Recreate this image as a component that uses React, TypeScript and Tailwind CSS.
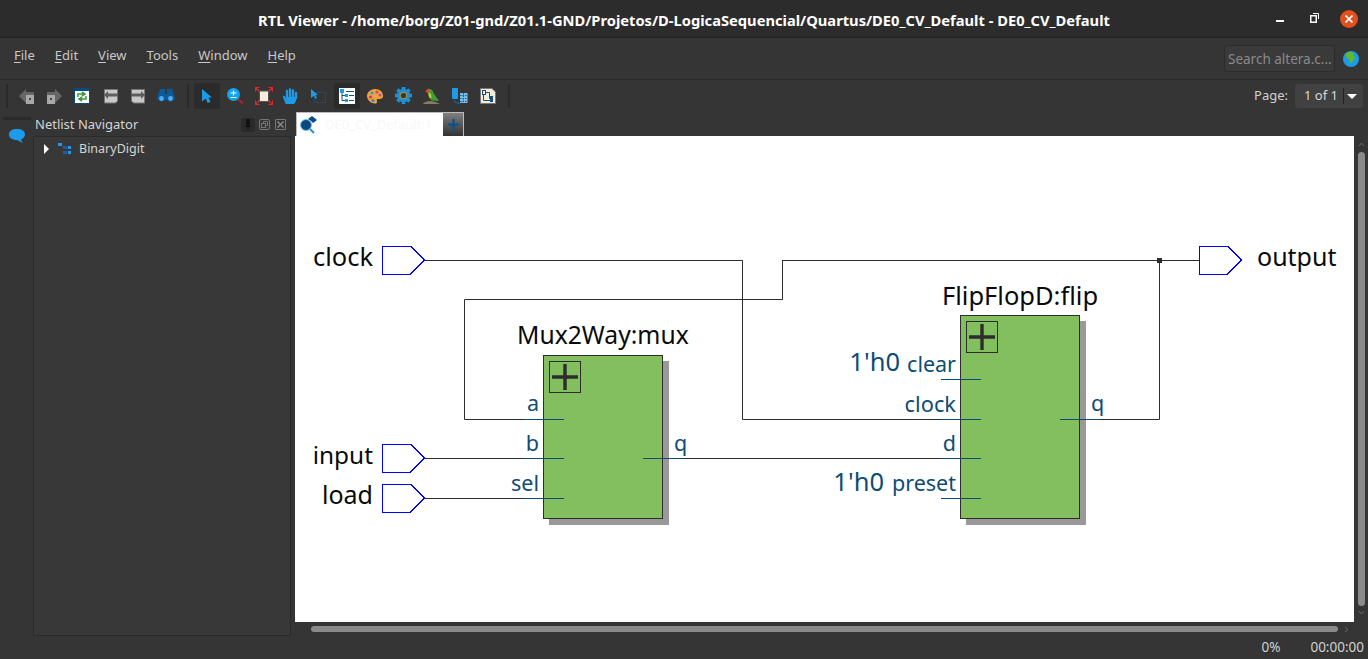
import React from "react";

const font = { fontFamily: '"Noto Sans", sans-serif' };

function Ic({ w = 18, h = 18, children }: { w?: number; h?: number; children: React.ReactNode }) {
  return (
    <svg width={w} height={h} viewBox={`0 0 ${w} ${h}`} className="block shrink-0">
      {children}
    </svg>
  );
}

const Back = ({ flip }: { flip?: boolean }) => (
  <Ic w={16} h={16}>
    <g transform={flip ? "translate(16,0) scale(-1,1)" : undefined}>
      <path d="M0 8 L7 1 V4 H15 V9 H7 V15 Z" fill="#666" />
      <rect x="7" y="7" width="8" height="9" fill="#a8a8a8" />
      <rect x="10" y="10" width="2" height="2" fill="#444" />
    </g>
  </Ic>
);

const Refresh = () => (
  <Ic w={16} h={16}>
    <rect x="0.5" y="0.5" width="15" height="15" fill="#fff" stroke="#0b4a80" />
    <rect x="0" y="0" width="16" height="3" fill="#0b4a80" />
    <path d="M4 9 V6 H10 M8 4 L11 6 L8 8" fill="none" stroke="#3f9a3f" strokeWidth="1.6" />
    <path d="M12 8 V11 H6 M8 9 L5 11 L8 13" fill="none" stroke="#3f9a3f" strokeWidth="1.6" />
  </Ic>
);

const Page = ({ flip }: { flip?: boolean }) => (
  <Ic w={16} h={16}>
    <g transform={flip ? "translate(16,0) scale(-1,1)" : undefined}>
      <path d="M1.5 1.5 H14.5 V13 L12.5 15 H1.5 Z" fill="#c8c8c8" stroke="#777" />
      <path d="M1 7 L5 3 V5.5 H15 V8.5 H5 V11 Z" fill="#5e5e5e" />
    </g>
  </Ic>
);

const Binoculars = () => (
  <Ic w={18} h={16}>
    <path d="M3 1 H8 V6 H10 V1 H15 L18 10 A4.5 4.5 0 0 1 10 12 H8 A4.5 4.5 0 0 1 0 10 Z" fill="#0a5a9c" />
    <circle cx="4.5" cy="10.5" r="2.4" fill="#52aee8" />
    <circle cx="13.5" cy="10.5" r="2.4" fill="#52aee8" />
  </Ic>
);

const Pointer = () => (
  <Ic w={10} h={14}>
    <path d="M0 0 L10 8.5 H6.5 L8.5 13 L5.5 14 L3.8 9.5 L0 12.5 Z" fill="#1e9be8" />
  </Ic>
);

const Zoom = () => (
  <Ic w={17} h={16}>
    <path d="M9.5 9.5 L16 15.5" stroke="#b3202a" strokeWidth="2" />
    <circle cx="6.5" cy="6.5" r="6.5" fill="#0ea5ee" />
    <path d="M3.5 5 H9.5 M6.5 2.5 V7.5 M3.5 9.5 H9.5" stroke="#fff" strokeWidth="1.2" />
  </Ic>
);

const Fit = () => (
  <Ic w={18} h={18}>
    <rect x="4.5" y="4" width="9" height="10.5" fill="#f6eeda" stroke="#555" />
    <path
      d="M0.5 4.5 V0.5 H4.5 M0.5 0.5 L4.5 4.5 M17.5 4.5 V0.5 H13.5 M17.5 0.5 L13.5 4.5 M0.5 13.5 V17.5 H4.5 M0.5 17.5 L4.5 13.5 M17.5 13.5 V17.5 H13.5 M17.5 17.5 L13.5 13.5"
      fill="none"
      stroke="#e8232a"
      strokeWidth="1.2"
    />
  </Ic>
);

const Hand = () => (
  <Ic w={16} h={16}>
    <path d="M4 16 L1 9 M4 10 V3 M7 9 V1.5 M10 9 V2.5 M13 10 V5" stroke="#1e9be8" strokeWidth="2.3" strokeLinecap="round" fill="none" />
    <path d="M3 9 H14 L12.5 14 L11 16 H4 Z" fill="#1e9be8" />
  </Ic>
);

const SelectRect = () => (
  <Ic w={15} h={14}>
    <rect x="3.5" y="3.5" width="11" height="10" fill="none" stroke="#1c5e8e" strokeDasharray="1 1" />
    <path d="M0 0 L7 6 H4.6 L6 9 L4.4 9.8 L3 6.8 L0 9 Z" fill="#1e9be8" />
  </Ic>
);

const Hier = () => (
  <Ic w={16} h={16}>
    <rect width="16" height="16" fill="#fff" />
    <rect x="1" y="1" width="4" height="4" fill="#1e9be8" />
    <rect x="6" y="6" width="3" height="3" fill="#1e9be8" />
    <rect x="6" y="11" width="3" height="3" fill="#1e9be8" />
    <path d="M3 5 V12.5 H6 M3 7.5 H6 M7 3.5 H15 M10 7.5 H15 M10 12.5 H15" fill="none" stroke="#12507e" strokeWidth="1" />
  </Ic>
);

const Palette = () => (
  <Ic w={16} h={16}>
    <path d="M8 1 C13 1 16 4 16 8 C16 11 13 11 11 11 C9 11 10 13 10 14 C10 15 9 15.5 8 15.5 C4 15.5 0 12 0 8 C0 4 4 1 8 1 Z" fill="#f0a23c" />
    <circle cx="5" cy="5" r="1.6" fill="#2f9be0" />
    <circle cx="10" cy="4" r="1.6" fill="#e04848" />
    <circle cx="13" cy="7" r="1.5" fill="#a050c0" />
    <circle cx="3.5" cy="9" r="1.6" fill="#e03070" />
    <circle cx="6" cy="12.5" r="1.6" fill="#3a80d8" />
  </Ic>
);

const Gear = () => (
  <Ic w={17} h={17}>
    <g fill="#1e8fd8">
      <circle cx="8.5" cy="8.5" r="6.6" />
      <rect x="6.7" y="0" width="3.6" height="17" />
      <rect x="0" y="6.7" width="17" height="3.6" />
      <rect x="6.7" y="0" width="3.6" height="17" transform="rotate(45 8.5 8.5)" />
      <rect x="6.7" y="0" width="3.6" height="17" transform="rotate(-45 8.5 8.5)" />
    </g>
    <circle cx="8.5" cy="8.5" r="3.8" fill="#a88a2c" />
    <circle cx="8.5" cy="8.5" r="2.6" fill="#2c3a44" />
  </Ic>
);

const Parrot = () => (
  <Ic w={17} h={16}>
    <path d="M4.5 1 C7 0 10 2 10.5 5 L16 13 L8.5 12.5 C5.5 10 4 6 4.5 1 Z" fill="#3f9e3a" />
    <path d="M2.5 4 C2.5 2 4.5 0.5 6 1.5 L6 5 Z" fill="#e0482c" />
    <path d="M5.5 4.5 C7.5 4.5 8.5 7.5 8.5 10 L6.5 9.5 Z" fill="#e8c030" />
    <path d="M0 15.5 C4 12 9 12 17 16 H0 Z" fill="#8d7a63" />
  </Ic>
);

const Layers = () => (
  <Ic w={16} h={16}>
    <rect x="0" y="0" width="6" height="11" rx="1" fill="#1e9be8" />
    <rect x="8" y="5" width="7.5" height="10" fill="#7bbce8" />
    <path d="M8 7.5 H15.5 M8 10.5 H15.5 M8 13.5 H15.5 M11.5 5 V15" stroke="#1c5e8e" strokeDasharray="1.5 1" />
    <path d="M2.5 12 C2.5 14.5 4.5 15.5 7.5 15.5 L6 13.5" fill="none" stroke="#1c5e8e" strokeWidth="1.2" />
  </Ic>
);

const Schem = () => (
  <Ic w={16} h={16}>
    <path d="M0.5 0.5 H12 L15.5 4 V15.5 H0.5 Z" fill="#f3ecd8" stroke="#777" />
    <rect x="2.5" y="2.5" width="3" height="4" fill="none" stroke="#12507e" />
    <path d="M5.5 4.5 H9.5 V10.5 H11 M3.5 6.5 V12.5 H11" fill="none" stroke="#12507e" />
    <rect x="10" y="8" width="3" height="6" fill="#12507e" />
  </Ic>
);

const Sep = () => <div className="w-[2px] h-[24px] bg-[#2a2a2a] shrink-0" />;

function Globe() {
  return (
    <svg width="16" height="16" viewBox="0 0 16 16" className="block">
      <circle cx="8" cy="8" r="8" fill="#1a9ce6" />
      <path d="M4 1.5 C7 0.5 10 1 11 2 L10 4 L12 6 L11 9 L9 11 L8 14 L7 10 L5 8 L3 6 L2.5 3.5 Z" fill="#5fb82e" />
    </svg>
  );
}

function Menu({ label }: { label: string }) {
  return (
    <span>
      <span className="underline underline-offset-2">{label[0]}</span>
      {label.slice(1)}
    </span>
  );
}

function Pin({ x, cy }: { x: number; cy: number }) {
  return (
    <path
      d={`M${x + 0.5} ${cy - 14} H${x + 28.5} L${x + 42.5} ${cy} L${x + 28.5} ${cy + 14} H${x + 0.5} Z`}
      fill="#fff"
      stroke="#0000ff"
      strokeWidth="1"
      shapeRendering="crispEdges"
    />
  );
}

function Block({ x, y, r, b }: { x: number; y: number; r: number; b: number }) {
  const px = x + 6;
  const py = y + 6;
  return (
    <g>
      <rect x={x + 6} y={y + 6} width={r - x + 1} height={b - y + 1} fill="#999999" />
      <rect x={x + 0.5} y={y + 0.5} width={r - x} height={b - y} fill="#83bf5f" stroke="#2d2d2d" />
      <rect x={px + 0.5} y={py + 0.5} width={31} height={31} fill="none" stroke="#2d2d2d" />
      <path d={`M${px + 3} ${py + 16} H${px + 29} M${px + 16} ${py + 3} V${py + 29}`} stroke="#2d2d2d" strokeWidth="3.4" />
    </g>
  );
}

const blue = "#0e4c75";
const wire = "#2d2d2d";

function Diagram() {
  const t = (x: number, y: number, s: string, size: number, fill: string, anchor: "start" | "end" = "end") => (
    <text x={x} y={y} fontSize={size} fill={fill} textAnchor={anchor} style={font}>
      {s}
    </text>
  );
  return (
    <svg width="1059" height="486" viewBox="295 136 1059 486" className="block bg-white">
      <Block x={543} y={355} r={662} b={518} />
      <Block x={960} y={315} r={1079} b={518} />
      <path
        d="M424 260.5 H742.5 V419.5 H941 M782 260.5 H1199 M782.5 260.5 V299.5 H464.5 V419.5 H524 M424 458.5 H524 M424 498.5 H524 M683 458.5 H941 M1100 419.5 H1159.5 V260.5"
        fill="none"
        stroke={wire}
      />
      <path
        d="M524 419.5 H564 M524 458.5 H564 M524 498.5 H564 M643 458.5 H683 M941 379.5 H981 M941 419.5 H981 M941 458.5 H981 M941 498.5 H981 M1060 419.5 H1100"
        fill="none"
        stroke={blue}
      />
      <rect x="1157" y="258" width="5" height="5" fill={wire} />
      <Pin x={382} cy={260} />
      <Pin x={382} cy={458} />
      <Pin x={382} cy={498} />
      <Pin x={1199} cy={260} />
      {t(373, 266, "clock", 25.5, "#0a0a0a")}
      {t(373, 464, "input", 24.4, "#0a0a0a")}
      {t(373, 504, "load", 25, "#0a0a0a")}
      {t(1257, 266, "output", 25, "#0a0a0a", "start")}
      {t(517, 344, "Mux2Way:mux", 24.7, "#0a0a0a", "start")}
      {t(942, 305, "FlipFlopD:flip", 25.5, "#0a0a0a", "start")}
      {t(539, 411, "a", 21.5, blue)}
      {t(539, 450.5, "b", 21.5, blue)}
      {t(539, 491, "sel", 21.5, blue)}
      {t(674, 451, "q", 21.5, blue, "start")}
      {t(956, 372, "clear", 21.5, blue)}
      {t(956, 412, "clock", 21.8, blue)}
      {t(956, 450.5, "d", 21.5, blue)}
      {t(956, 491, "preset", 21.5, blue)}
      {t(1091, 411, "q", 21.5, blue, "start")}
      {t(900, 371, "1'h0", 25.5, blue)}
      {t(884, 490.5, "1'h0", 25.5, blue)}
    </svg>
  );
}

export default function App() {
  return (
    <div className="w-[1368px] h-[659px] flex flex-col bg-[#353535] text-[#d8d8d8] overflow-hidden" style={font}>
      <div className="h-[38px] shrink-0 flex items-center bg-[#2c2c2c] border-b border-[#222] relative pt-[3px]">
        <div className="flex-1 text-center text-white font-bold text-[14.7px]">
          RTL Viewer - /home/borg/Z01-gnd/Z01.1-GND/Projetos/D-LogicaSequencial/Quartus/DE0_CV_Default - DE0_CV_Default
        </div>
        <div className="absolute right-[10px] top-[10px] flex items-center">
          <div className="w-[8px] h-[2px] bg-white mr-[26px] mt-[4px]" />
          <svg width="9" height="10" viewBox="0 0 9 10" className="mr-[21px] -mt-[2px]">
            <rect x="0.75" y="2.75" width="5.5" height="6.5" fill="none" stroke="#fff" strokeWidth="1.5" />
            <path d="M3 0.5 H8.5 V6" fill="none" stroke="#fff" />
          </svg>
          <div className="w-[18px] h-[18px] rounded-full bg-[#e2501e] flex items-center justify-center">
            <svg width="8" height="8" viewBox="0 0 8 8">
              <path d="M0.5 0.5 L7.5 7.5 M7.5 0.5 L0.5 7.5" stroke="#fff" strokeWidth="1.6" />
            </svg>
          </div>
        </div>
      </div>

      <div className="h-[42px] shrink-0 flex items-center border-b border-[#2a2a2a] pl-[14px] pr-[9px] text-[13px] text-[#c8c8c8]">
        <div className="flex gap-[20px] pb-[6px]">
          <Menu label="File" />
          <Menu label="Edit" />
          <Menu label="View" />
          <Menu label="Tools" />
          <Menu label="Window" />
          <Menu label="Help" />
        </div>
        <div className="ml-auto w-[111px] h-[27px] rounded-[3px] bg-[#3a3a3a] border border-[#2c2c2c] flex items-center pl-[3px] pt-[2px] text-[#8a8a8a] text-[13.5px] mr-[8px] whitespace-nowrap overflow-hidden">
          Search altera.c...
        </div>
        <Globe />
      </div>

      <div className="h-[31px] shrink-0 flex items-center pl-[6px] pr-[5px]">
        <Sep />
        <div className="w-[11px]" />
        <Back />
        <div className="w-[11px]" />
        <Back flip />
        <div className="w-[12px]" />
        <Refresh />
        <div className="w-[13px]" />
        <Page />
        <div className="w-[11px]" />
        <Page flip />
        <div className="w-[11px]" />
        <Binoculars />
        <div className="w-[12px]" />
        <Sep />
        <div className="w-[5px]" />
        <div className="w-[26px] h-[26px] bg-[#2b2b2b] rounded-[2px] flex items-center justify-center">
          <Pointer />
        </div>
        <div className="w-[7px]" />
        <Zoom />
        <div className="w-[11px]" />
        <Fit />
        <div className="w-[10px]" />
        <Hand />
        <div className="w-[12px]" />
        <SelectRect />
        <div className="w-[8px]" />
        <div className="w-[26px] h-[26px] bg-[#2b2b2b] rounded-[2px] flex items-center justify-center">
          <Hier />
        </div>
        <div className="w-[7px]" />
        <Palette />
        <div className="w-[12px]" />
        <Gear />
        <div className="w-[11px]" />
        <Parrot />
        <div className="w-[12px]" />
        <Layers />
        <div className="w-[12px]" />
        <Schem />
        <div className="w-[12px]" />
        <Sep />
        <div className="ml-auto flex items-center gap-[7px] text-[13px] text-[#d0d0d0] pt-[1px]">
          <span>Page:</span>
          <div className="w-[68px] h-[24px] rounded-[3px] bg-[#414141] flex items-center pl-[9px] text-[#d8d8d8]">
            <span>1 of 1</span>
            <div className="ml-[5px] w-px h-[16px] bg-[#222]" />
            <div className="ml-[3px] w-0 h-0 border-x-[5px] border-x-transparent border-t-[5px] border-t-white" />
          </div>
        </div>
      </div>

      <div className="flex-1 flex min-h-0">
        <div className="w-[33px] shrink-0 pt-[6px] pl-[3px]">
          <div className="w-[28px] h-[3px] bg-[#2a2a2a]" />
          <svg width="16" height="15" viewBox="0 0 16 15" className="ml-[6px] mt-[9px]">
            <path d="M8 0 C13 0 16 2 16 5.5 C16 8 14 10 12 10.5 L13.5 14 L8 11 C3 11 0 8.5 0 5.5 C0 2 3 0 8 0 Z" fill="#1e9be8" />
          </svg>
        </div>
        <div className="w-[258px] shrink-0 flex flex-col">
          <div className="h-[25px] shrink-0 flex items-center pl-[2px] pr-[5px] pt-[2px] text-[13px] text-[#d4d4d4]">
            <span>Netlist Navigator</span>
            <div className="ml-auto flex items-center">
              <div className="w-[14px] h-[14px] bg-[#2a2a2a] rounded-[2px] flex items-center justify-center">
                <svg width="6" height="11" viewBox="0 0 6 11">
                  <path d="M1.5 0.5 H4.5 V7 H1.5 Z M0 7.5 H6 M3 7.5 V11" fill="#111" stroke="#111" />
                </svg>
              </div>
              <svg width="11" height="11" viewBox="0 0 11 11" className="ml-[4px]">
                <rect x="0.5" y="0.5" width="10" height="10" rx="1.5" fill="none" stroke="#777" />
                <rect x="2.5" y="4.5" width="4" height="4" fill="none" stroke="#777" />
                <path d="M4.5 4.5 V2.5 H8.5 V6.5 H6.5" fill="none" stroke="#777" />
              </svg>
              <div className="ml-[5px] w-[11px] h-[11px] border border-[#777] rounded-[1px] flex items-center justify-center">
                <svg width="7" height="7" viewBox="0 0 7 7">
                  <path d="M0.5 0.5 L6.5 6.5 M6.5 0.5 L0.5 6.5" stroke="#888" strokeWidth="1.5" />
                </svg>
              </div>
            </div>
          </div>
          <div className="flex-1 bg-[#383838] border border-[#2a2a2a] flex items-start pt-[4px] pl-[10px] text-[12.5px] text-[#d4d4d4]">
            <div className="h-[16px] flex items-center">
              <div className="w-0 h-0 border-y-[5px] border-y-transparent border-l-[5px] border-l-white" />
              <svg width="14" height="12" viewBox="0 0 14 12" className="ml-[9px]">
                <rect x="0" y="0" width="4" height="3" fill="#1e9be8" />
                <rect x="5" y="3" width="4" height="3" fill="#1e5f9e" />
                <rect x="5" y="8" width="4" height="3" fill="#1e5f9e" />
                <rect x="10" y="3" width="3" height="3" fill="#1e9be8" />
                <rect x="10" y="8" width="3" height="3" fill="#1e9be8" />
              </svg>
              <span className="ml-[7px]">BinaryDigit</span>
            </div>
          </div>
        </div>
        <div className="w-[4px] shrink-0" />
        <div className="flex-1 min-w-0 flex flex-col">
          <div className="h-[25px] shrink-0 flex items-end">
            <div className="ml-[1px] w-[147px] h-[24px] bg-white border-l border-t border-[#bbb] flex items-center text-[#f8f8f8] text-[13px] gap-[6px]">
              <svg width="20" height="18" viewBox="0 0 20 18" className="ml-[2px] shrink-0">
                <path d="M9 3 L13 0 L18 4 L14 7 L12 5 Z" fill="#0b4a80" />
                <circle cx="7" cy="9" r="5.5" fill="#0b4a80" stroke="#7cc4e8" />
                <path d="M11 13 L15 17" stroke="#2f8fc8" strokeWidth="2" />
              </svg>
              <span>DE0_CV_Default:1</span>
            </div>
            <div className="w-[21px] h-[24px] bg-gradient-to-b from-[#808080] to-[#333333] border-t border-r border-[#bbb] flex items-center justify-center">
              <svg width="13" height="13" viewBox="0 0 13 13">
                <path d="M1 6.5 H12 M6.5 1 V12" stroke="#0b5090" strokeWidth="2.2" />
              </svg>
            </div>
          </div>
          <div className="flex-1 min-h-0 flex">
            <div className="flex-1 min-w-0 flex flex-col">
              <Diagram />
              <div className="h-[14px] flex items-center relative">
                <div className="ml-[16px] w-[1027px] h-[6px] rounded-full bg-[#8a8a8a]" />
                <svg width="5" height="7" viewBox="0 0 5 7" className="ml-[6px]">
                  <path d="M1 1 L4 3.5 L1 6" fill="none" stroke="#6a6a6a" />
                </svg>
              </div>
            </div>
            <div className="w-[14px] shrink-0 flex flex-col items-center pt-[6px]">
              <svg width="7" height="5" viewBox="0 0 7 5">
                <path d="M1 4 L3.5 1 L6 4" fill="none" stroke="#6a6a6a" />
              </svg>
              <div className="w-[7px] h-[454px] mt-[5px] rounded-full bg-[#8a8a8a]" />
              <svg width="7" height="5" viewBox="0 0 7 5" className="mt-[4px]">
                <path d="M1 1 L3.5 4 L6 1" fill="none" stroke="#6a6a6a" />
              </svg>
            </div>
          </div>
        </div>
      </div>

      <div className="h-[23px] shrink-0 flex items-center justify-end pr-[4px] text-[13.5px] text-[#d0d0d0] gap-[30px]">
        <span>0%</span>
        <span>00:00:00</span>
      </div>
    </div>
  );
}
